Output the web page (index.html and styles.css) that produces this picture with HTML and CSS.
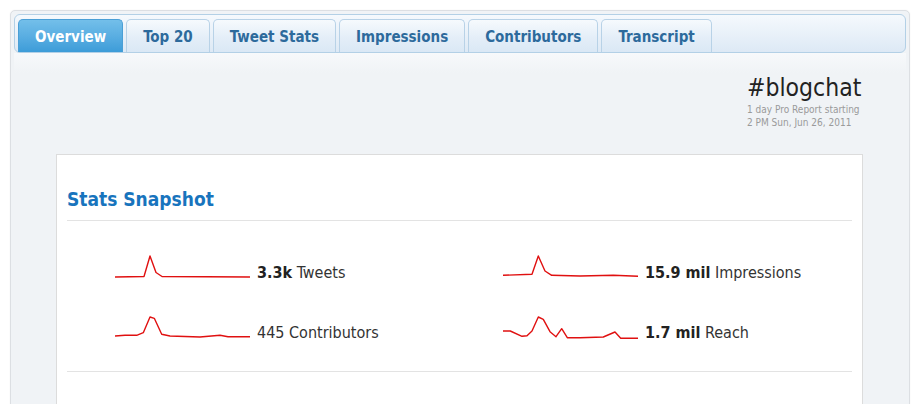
FILE: index.html
```html
<!DOCTYPE html>
<html>
<head>
<meta charset="utf-8">
<link rel="stylesheet" href="styles.css">
</head>
<body>
<div class="panel">
  <div class="tabbar">
    <a class="tab active">Overview</a>
    <a class="tab">Top 20</a>
    <a class="tab">Tweet Stats</a>
    <a class="tab">Impressions</a>
    <a class="tab">Contributors</a>
    <a class="tab">Transcript</a>
  </div>
  <div class="content">
    <div class="header">
      <div class="header-block">
        <div class="hashtag">#blogchat</div>
        <div class="sub">1 day Pro Report starting</div>
        <div class="sub">2 PM Sun, Jun 26, 2011</div>
      </div>
    </div>
    <div class="card">
      <h2 class="card-title">Stats Snapshot</h2>
      <div class="stats">
        <div class="stat">
          <svg class="spark" width="135" height="25" viewBox="0 0 135 25"><polyline points="0,23 29,22.5 35,2 41,18.5 47,22.5 135,23"/></svg>
          <span class="label"><b>3.3k</b> Tweets</span>
        </div>
        <div class="stat">
          <svg class="spark" width="135" height="25" viewBox="0 0 135 25"><polyline points="0,21.3 29,20.3 35.3,2 42,17 48.7,21.3 77,22 110.3,21.3 135,22.3"/></svg>
          <span class="label"><b>15.9 mil</b> Impressions</span>
        </div>
        <div class="stat">
          <svg class="spark" width="135" height="25" viewBox="0 0 135 25"><polyline points="0,22 10,21.3 21.7,21.3 28.3,18.7 35,3 39.3,4.3 46.7,20.3 55,22 85,23 105,21.3 113,22.7 135,22.7"/></svg>
          <span class="label">445 Contributors</span>
        </div>
        <div class="stat">
          <svg class="spark" width="135" height="25" viewBox="0 0 135 25"><polyline points="0,17 7.3,17 19,22.3 24,21.7 29,17 35.3,3 40.3,5.3 47,17.7 53,22.7 58.7,14.7 64.3,23.7 77,23.7 100.3,23 112,18 117.7,24.3 135,24.3"/></svg>
          <span class="label"><b>1.7 mil</b> Reach</span>
        </div>
      </div>
    </div>
  </div>
</div>
</body>
</html>
```
FILE: styles.css
```css
html, body {
  margin: 0;
  padding: 0;
  background: #ffffff;
}
body {
  font-family: "DejaVu Sans Condensed", "DejaVu Sans", sans-serif;
  font-stretch: condensed;
  color: #333;
  overflow: hidden;
  height: 404px;
}
.panel {
  margin: 10px 0 0 10px;
  width: 900px;
  height: 420px;
  border: 1px solid #dcdfe3;
  border-radius: 5px;
  background: #f0f3f6;
  padding: 3px;
  box-sizing: border-box;
  box-shadow: 0 0 2px rgba(0,0,0,0.05);
}
.tabbar {
  display: flex;
  gap: 3px;
  height: 39px;
  box-sizing: border-box;
  padding: 4px 3px 0;
  border: 1px solid #b3d0e6;
  border-radius: 6px;
  background: linear-gradient(#f5f9fd, #dde9f5);
}
.tab {
  display: flex;
  align-items: center;
  padding: 1px 16px 0;
  height: 33px;
  box-sizing: border-box;
  border: 1px solid #b8d2e7;
  border-bottom: none;
  border-radius: 5px 5px 0 0;
  background: linear-gradient(#f6fafd, #e4eef8 55%, #dae8f5);
  color: #2d6a9c;
  font-weight: bold;
  font-size: 15px;
}
.tab.active {
  background: linear-gradient(#73bfea, #5aaee2 50%, #3d9cd8);
  border-color: #4a9fd6;
  color: #fff;
}
.content {
  padding: 0 43px 0 42px;
  background: linear-gradient(#f7f9fb, #f0f3f6 20px);
}
.header {
  display: flex;
  justify-content: flex-end;
  padding-top: 20px;
  height: 101px;
  box-sizing: border-box;
}
.header-block {
  width: 116px;
}
.hashtag {
  font-size: 24.5px;
  line-height: 30px;
  color: #222;
}
.sub {
  font-size: 10px;
  line-height: 13px;
  color: #9a9a9a;
}
.card {
  background: #fff;
  border: 1px solid #dcdcdc;
  padding: 0 10px;
  height: 300px;
}
.card-title {
  margin: 0;
  padding-top: 30px;
  font-size: 19px;
  line-height: 28px;
  color: #1874bd;
  font-weight: bold;
  border-bottom: 1px solid #e3e3e3;
  padding-bottom: 7px;
}
.stats {
  display: grid;
  grid-template-columns: 388px 1fr;
  row-gap: 35px;
  padding-top: 33px;
  padding-bottom: 32px;
  border-bottom: 1px solid #e3e3e3;
}
.stat {
  display: flex;
  align-items: flex-end;
  padding-left: 48px;
  height: 25px;
}
.spark {
  display: block;
  flex: none;
}
.spark polyline {
  fill: none;
  stroke: #e01010;
  stroke-width: 1.4;
  stroke-linejoin: round;
}
.label {
  margin-left: 7px;
  font-size: 16px;
  line-height: 18px;
  color: #333;
  position: relative;
  top: 3px;
}
.label b {
  color: #222;
}
```
